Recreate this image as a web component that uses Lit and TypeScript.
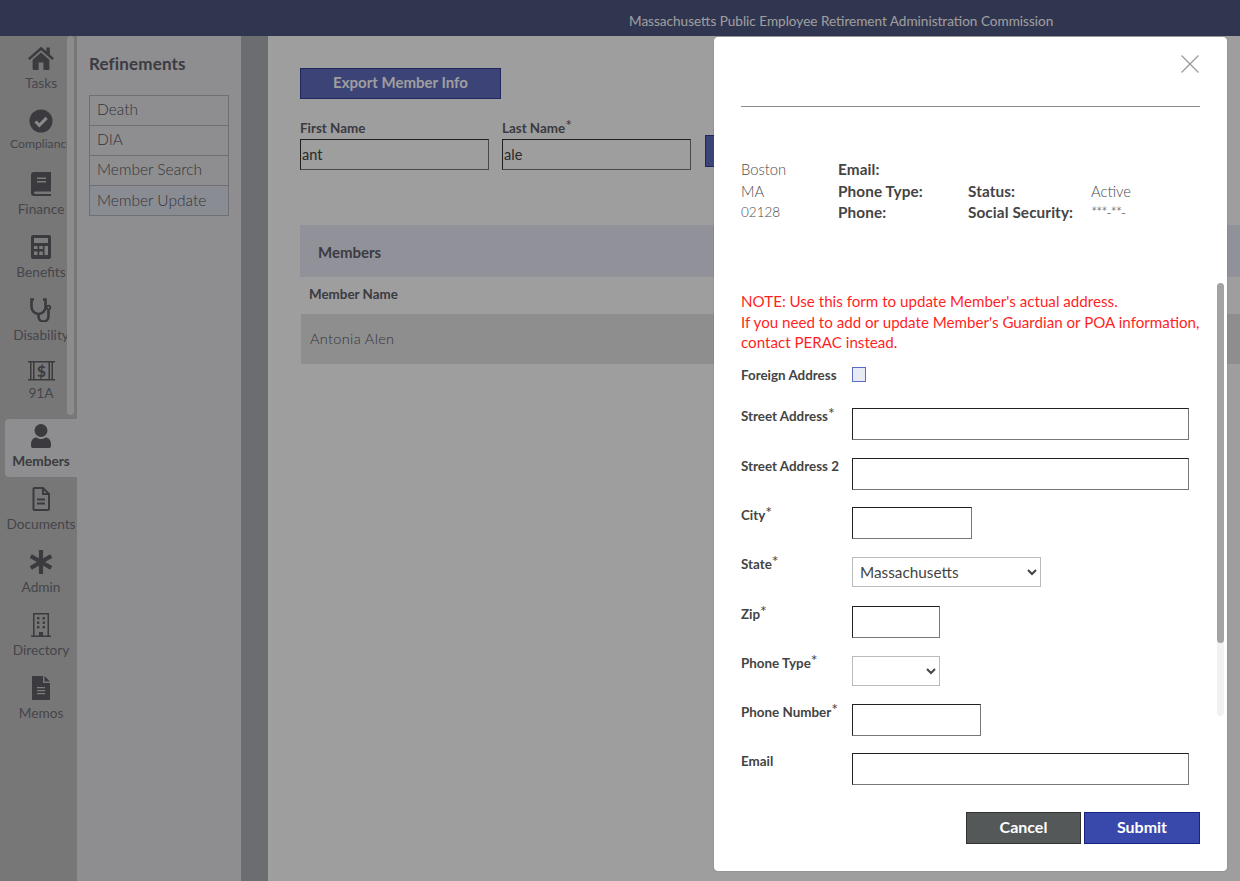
import { LitElement, html, css, unsafeCSS } from "lit";
import { customElement } from "lit/decorators.js";

const FONT = unsafeCSS(`"Lato", "Open Sans", "Liberation Sans", sans-serif`);

const icons: Record<string, any> = {
  home: html`<svg width="26" height="24" viewBox="0 0 26 24"><path d="M13 .8 0 12.2l1.7 1.9L13 4.2l11.3 9.9 1.7-1.9-4.2-3.7V1.6h-3.4v3.700z"/><path d="M13 6.400 4.600 13.800V23a1 1 0 0 0 1 1h5V16.500h4.800V24h5a1 1 0 0 0 1-1v-9.200z"/></svg>`,
  check: html`<svg width="24" height="24" viewBox="0 0 24 24"><circle cx="12" cy="12" r="11.500"/><path d="M6.500 12.500l3.800 3.800 7.400-7.400" fill="none" stroke="#dfdfdf" stroke-width="3"/></svg>`,
  book: html`<svg width="20" height="24" viewBox="0 0 20 24"><path d="M3 0h17v19.500H4a1.300 1.300 0 0 0 0 2.500h16v2H3a3 3 0 0 1-3-3V3a3 3 0 0 1 3-3z"/><path d="M6 5.500h9v1.600H6zM6 9h9v1.600H6z" fill="#c8c8c8"/></svg>`,
  calc: html`<svg width="20" height="24" viewBox="0 0 20 24"><rect width="20" height="24" rx="2"/><g fill="#c8c8c8"><rect x="3" y="3" width="14" height="5"/><rect x="3" y="11" width="3.500" height="3"/><rect x="8.300" y="11" width="3.500" height="3"/><rect x="13.500" y="11" width="3.500" height="9"/><rect x="3" y="16.500" width="3.500" height="3.500"/><rect x="8.300" y="16.500" width="3.500" height="3.500"/></g></svg>`,
  steth: html`<svg width="24" height="24" viewBox="0 0 24 24" fill="none" stroke-width="2.600" style="stroke:currentColor"><path d="M5 1.500H2.500V9a7 7 0 0 0 14 0V1.500H14"/><path d="M9.500 16v2.500a5 5 0 0 0 10 0V12"/><circle cx="19.500" cy="9.500" r="1.800" stroke-width="1.800"/></svg>`,
  bars: html`<svg width="27" height="20" viewBox="0 0 27 20"><path d="M0 0h27v1.500H0zM0 18h27v1.500H0zM2 1h1.500v17H2zM5 1h1.500v17H5zM20.500 1H22v17h-1.500zM23.500 1H25v17h-1.500z"/><text x="13.500" y="15.500" text-anchor="middle" font-size="16" font-weight="700" font-family="Lato, sans-serif">$</text></svg>`,
  user: html`<svg width="20" height="24" viewBox="0 0 20 24"><circle cx="10" cy="6.500" r="6.500"/><path d="M0 20.500c0-4.500 2.500-7 5.500-7 1.500 1 3 1.500 4.500 1.500s3-.5 4.500-1.500c3 0 5.500 2.500 5.500 7V22a2 2 0 0 1-2 2H2a2 2 0 0 1-2-2z"/></svg>`,
  doc: html`<svg width="18" height="24" viewBox="0 0 18 24" fill="none" style="stroke:currentColor" stroke-width="2"><path d="M2.500 1H11l6 6v15a1 1 0 0 1-1 1H2.500a1 1 0 0 1-1-1V2a1 1 0 0 1 1-1z"/><path d="M11 1v6h6"/><path d="M5 12.500h8M5 16.500h8" stroke-width="2.200"/></svg>`,
  star: html`<svg width="22" height="24" viewBox="0 0 22 24" style="stroke:currentColor" stroke-width="4.200"><path d="M11 0v24M.8 6l20.400 12M21.200 6 .8 18"/></svg>`,
  bldg: html`<svg width="20" height="24" viewBox="0 0 20 24"><path d="M2 0h16v22.500h2V24H0v-1.500h2zM3.500 1.500v21h4.500V19h4v3.500h4.500v-21z"/><g><rect x="6" y="4" width="2.400" height="2.400"/><rect x="11.600" y="4" width="2.400" height="2.400"/><rect x="6" y="8.500" width="2.400" height="2.400"/><rect x="11.600" y="8.500" width="2.400" height="2.400"/><rect x="6" y="13" width="2.400" height="2.400"/><rect x="11.600" y="13" width="2.400" height="2.400"/></g></svg>`,
  file: html`<svg width="18" height="24" viewBox="0 0 18 24"><path d="M1 0h10v7h7v16a1 1 0 0 1-1 1H1a1 1 0 0 1-1-1V1a1 1 0 0 1 1-1z"/><path d="M12.500 0 18 5.500h-5.500z"/><path d="M5 11h8v1.300H5zM5 14h8v1.300H5zM5 17h8v1.300H5z" fill="#c8c8c8"/></svg>`,
};

const nav = [
  ["Tasks", "home", ""],
  ["Compliance", "check", "tight"],
  ["Finance", "book", ""],
  ["Benefits", "calc", ""],
  ["Disability", "steth", ""],
  ["91A", "bars", "short"],
  ["Members", "user", "active"],
  ["Documents", "doc", ""],
  ["Admin", "star", ""],
  ["Directory", "bldg", ""],
  ["Memos", "file", ""],
];

@customElement("app-root")
export class AppRoot extends LitElement {
  static styles = css`
    :host { display: block; height: 881px; overflow: hidden; position: relative; font-family: ${FONT}; background: #fff; color: #5f5f66; }
    * { box-sizing: border-box; }
    .top { height: 36px; background: #4e5681; color: #fff; font-size: 13.55px; padding: 13px 0 0 629px; line-height: 16px; white-space: nowrap; }
    .shell { display: flex; height: 845px; }
    .side { width: 77px; background: #c0c0c0; padding-top: 5px; position: relative; flex: none; }
    .thumb { position: absolute; left: 67px; top: 0; width: 7px; height: 379px; border-radius: 4px; background: #e2e2e2; z-index: 1; }
    .item { position: relative; height: 63px; margin-left: 5px; padding-top: 5px; display: flex; flex-direction: column; align-items: center; font-size: 13.7px; line-height: 16px; color: #70707a; white-space: nowrap; }
    .item .ic { height: 24px; margin-bottom: 5px; color: #5f5f66; fill: #5f5f66; display: flex; align-items: center; justify-content: center; }
    .item.short .ic { height: 20px; margin-bottom: 4px; }
    .item span { display: block; width: 72px; text-align: center; }
    .item.tight .ic { margin-bottom: 3px; }
    .item.tight span { font-size: 12.2px; text-align: left; padding-left: 5px; }
    .item.active { height: 58px; margin-bottom: 5px; background: #e6e6e8; border-radius: 4px 0 0 4px; }
    .item.active span { font-weight: 700; color: #5f5f66; }
    .ref { width: 164px; background: #e6e6e8; padding: 19px 12px 0; flex: none; }
    .ref h2 { margin: 0 0 22px; font-size: 17px; letter-spacing: .15px; line-height: 18px; font-weight: 700; color: #60606a; }
    .ref ul { list-style: none; margin: 0; padding: 0; width: 140px; border: 1px solid #b5b5b8; }
    .ref li { height: 30px; padding-left: 7px; line-height: 27px; font-size: 15.5px; font-weight: 300; color: #55555d; border-bottom: 1px solid #b5b5b8; }
    .ref li:last-child { border-bottom: 0; background: #dfe3ee; height: 29px; line-height: 29px; }
    .band { width: 27px; background: #adb0b6; flex: none; }
    .main { flex: 1; padding: 32px 0 0 32px; min-width: 0; }
    .export { display: block; width: 201px; height: 31px; background: #606cc0; border: 1px solid #36409a; color: #fff; font: 700 15px ${FONT}; padding: 0 0 4px; }
    .filters { display: flex; align-items: flex-end; margin-top: 20px; height: 51px; }
    .fld { width: 189px; margin-right: 13px; }
    .fld label { display: block; font-size: 13.4px; font-weight: 700; line-height: 16px; margin-bottom: 3px; color: #60606a; white-space: nowrap; }
    sup { font-size: 16px; line-height: 0; font-weight: 400; vertical-align: 0; position: relative; top: -2px; }
    .fld input { display: block; width: 189px; height: 31px; background: #fff; border: 1px solid; border-color: #333 #777 #777 #333; font: 400 14.5px ${FONT}; color: #444; padding: 0 1px; }
    .search { width: 110px; height: 32px; margin: 0 0 3px 1px; background: #606cc0; border: 1px solid #36409a; flex: none; }
    .band2 { margin-top: 55px; height: 52px; background: #ebebf9; padding: 2px 0 0 18px; display: flex; align-items: center; font-size: 15px; font-weight: 700; color: #60606a; }
    .colhead { height: 37px; padding-left: 9px; line-height: 34px; font-size: 13.4px; font-weight: 700; color: #60606a; }
    .row { height: 50px; margin-left: 1px; background: #e6e6e6; padding-left: 9px; line-height: 49px; font-size: 14.5px; letter-spacing: .35px; font-weight: 300; color: #55555d; }

    .veil { position: absolute; inset: 0; background: rgba(0,0,0,.38); z-index: 2; }
    .modal { position: absolute; z-index: 3; left: 714px; top: 37px; width: 513px; height: 834px; background: #fff; border-radius: 4px; padding: 0 27px; display: flex; flex-direction: column; box-shadow: 0 0 1px #555; color: #444; }
    .head { height: 70px; border-bottom: 1px solid #8c8c8c; display: flex; justify-content: flex-end; padding: 18px 1px 0 0; }
    .head svg { display: block; }
    .info { display: grid; grid-template-columns: 97px 130px 123px 1fr; grid-auto-rows: 21.5px; margin-top: 52.3px; font-size: 14.8px; line-height: 21.5px; font-weight: 300; color: #4a4a4a; }
    .info b { font-size: 15.3px; letter-spacing: .1px; font-weight: 700; color: #444; white-space: nowrap; }
    .info .zip { font-size: 13.5px; }
    .info .ssn { letter-spacing: -1.2px; }
    .note { margin: 67.4px 0 0; color: #ff1f1f; font-size: 15.15px; line-height: 20.5px; font-weight: 400; white-space: nowrap; }
    .form { margin-top: 14.65px; }
    .fr { display: flex; height: 49.3px; }
    .fr label { width: 111px; flex: none; font-size: 13.4px; line-height: 16px; font-weight: 700; color: #444; white-space: nowrap; }
    .fr.cb { height: 41px; align-items: flex-start; }
    .box { width: 14px; height: 15px; background: #e8eaf6; border: 1px solid #5c6bc0; }
    .fr input { height: 32px; background: #fff; border: 1px solid; border-color: #222 #777 #777 #222; padding: 0; display: block; }
    .fr select { height: 30px; margin-top: 1px; background: #fff; border: 1px solid #bbb; font: 400 15.3px ${FONT}; color: #444; padding: 0 3px; display: block; }
    .w337 { width: 337px; } .w120 { width: 120px; } .w88 { width: 88px; } .w129 { width: 129px; } .w189 { width: 189px; }
    .foot { display: flex; justify-content: flex-end; gap: 3px; margin-top: auto; padding-bottom: 27px; }
    .foot button { height: 32px; width: 115px; color: #fff; font: 700 16px ${FONT}; padding: 0 0 4px; }
    .cancel { background: #555858; border: 1px solid #333; }
    .foot .submit { background: #3949ab; border: 1px solid #1a237e; width: 116px; }
    .track { position: absolute; right: 3px; top: 246px; width: 7px; height: 433px; background: #f1f1f1; border-radius: 4px; }
    .track i { display: block; height: 360px; background: #a3a3a3; border-radius: 4px; }
  `;

  render() {
    return html`
      <div class="top">Massachusetts Public Employee Retirement Administration Commission</div>
      <div class="shell">
        <nav class="side">
          <div class="thumb"></div>
          ${nav.map(([t, i, c]) => html`<div class="item ${c}"><div class="ic">${icons[i]}</div><span>${t}</span></div>`)}
        </nav>
        <aside class="ref">
          <h2>Refinements</h2>
          <ul><li>Death</li><li>DIA</li><li>Member Search</li><li>Member Update</li></ul>
        </aside>
        <div class="band"></div>
        <main class="main">
          <button class="export">Export Member Info</button>
          <div class="filters">
            <div class="fld"><label>First Name</label><input value="ant" /></div>
            <div class="fld"><label>Last Name<sup>*</sup></label><input value="ale" /></div>
            <button class="search"></button>
          </div>
          <div class="band2">Members</div>
          <div class="colhead">Member Name</div>
          <div class="row">Antonia Alen</div>
        </main>
      </div>
      <div class="veil"></div>
      <section class="modal">
        <div class="head">
          <svg width="18" height="18" viewBox="0 0 18 18" fill="none" stroke="#999" stroke-width="1.200"><path d="M.5.5l17 17M17.500.5l-17 17"/></svg>
        </div>
        <div class="info">
          <span>Boston</span><b>Email:</b><span></span><span></span>
          <span>MA</span><b>Phone Type:</b><b>Status:</b><span>Active</span>
          <span class="zip">02128</span><b>Phone:</b><b>Social Security:</b><span class="ssn">***-**-</span>
        </div>
        <p class="note">NOTE: Use this form to update Member's actual address.<br />If you need to add or update Member's Guardian or POA information,<br />contact PERAC instead.</p>
        <div class="form">
          <div class="fr cb"><label>Foreign Address</label><div class="box"></div></div>
          <div class="fr"><label>Street Address<sup>*</sup></label><input class="w337" /></div>
          <div class="fr"><label>Street Address 2</label><input class="w337" /></div>
          <div class="fr"><label>City<sup>*</sup></label><input class="w120" /></div>
          <div class="fr"><label>State<sup>*</sup></label><select class="w189"><option>Massachusetts</option></select></div>
          <div class="fr"><label>Zip<sup>*</sup></label><input class="w88" /></div>
          <div class="fr"><label>Phone Type<sup>*</sup></label><select class="w88"><option></option></select></div>
          <div class="fr"><label>Phone Number<sup>*</sup></label><input class="w129" /></div>
          <div class="fr"><label>Email</label><input class="w337" /></div>
        </div>
        <div class="foot"><button class="cancel">Cancel</button><button class="submit">Submit</button></div>
        <div class="track"><i></i></div>
      </section>
    `;
  }
}
